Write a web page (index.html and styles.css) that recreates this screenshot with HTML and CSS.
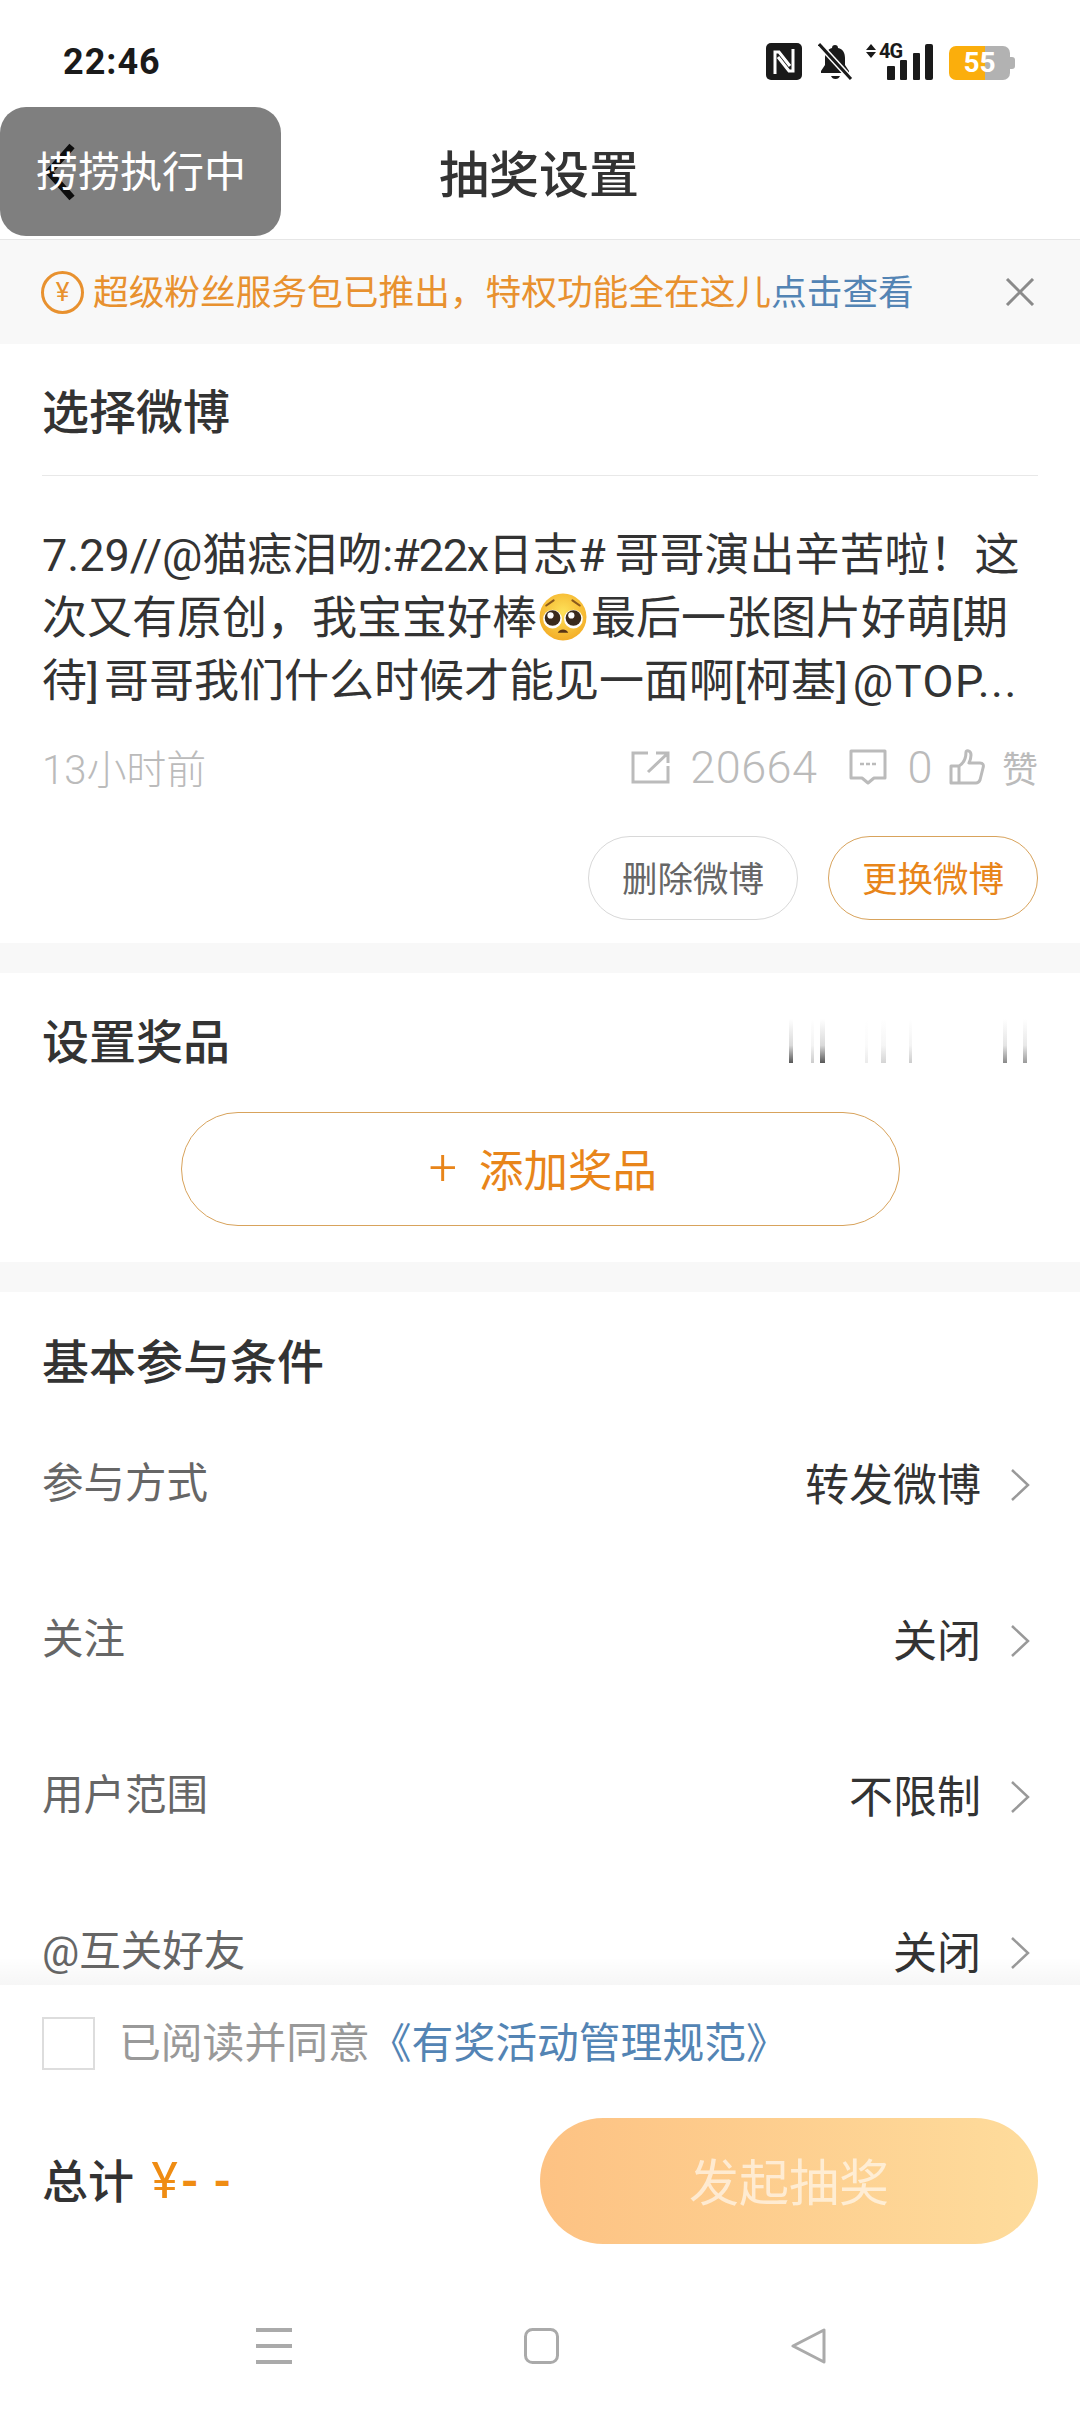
FILE: index.html
```html
<!DOCTYPE html>
<html lang="zh-CN">
<head>
    <meta charset="UTF-8">
    <meta name="viewport" content="width=device-width, initial-scale=1.0">
    <title>抽奖设置</title>
    <link rel="stylesheet" href="styles.css">
</head>
<body>
<div class="screen">
    <!-- barra de status -->
    <div class="status-bar">
        <span class="time">22:46</span>
        <div class="status-icons">
            <svg class="ic-nfc" width="36" height="37" viewBox="0 0 36 37">
                <rect width="36" height="37" rx="5" fill="#1a1a1a"/>
                <path d="M9 31V9h4l11 14M27 6v22h-4L12 14" fill="none" stroke="#fff" stroke-width="3"/>
            </svg>
            <svg class="ic-bell" width="35" height="37" viewBox="0 0 35 37">
                <path d="M17 2c2 0 3 1 3 3 5 1 7 5 7 10v7l4 6v2H3v-2l4-6v-7c0-5 3-9 7-10 0-2 1-3 3-3zM13 33h9c-1 2-2 3-4.500 3S14 35 13 33z" fill="#1a1a1a"/>
                <path d="M1 1l32 35" stroke="#fff" stroke-width="6"/>
                <path d="M1 1l32 35" stroke="#1a1a1a" stroke-width="3"/>
            </svg>
            <svg class="ic-signal" width="67" height="47" viewBox="0 -10 67 47">
                <path d="M5 1l5 6H0zM5 15L0 9h10z" fill="#1a1a1a"/>
                <text class="net-label" x="13" y="15">4G</text>
                <rect x="21" y="23" width="8" height="14" rx="1" fill="#1a1a1a"/>
                <rect x="34" y="17" width="7" height="20" rx="1" fill="#1a1a1a"/>
                <rect x="47" y="10" width="7" height="27" rx="1" fill="#1a1a1a"/>
                <rect x="59" y="1" width="8" height="36" rx="2" fill="#1a1a1a"/>
            </svg>
            <div class="battery">55</div>
        </div>
    </div>

    <!-- cabecalho -->
    <div class="nav-bar">
        <svg class="nav-back" width="32" height="60" viewBox="0 0 32 60">
            <path d="M28 3L5 29l23 26" fill="none" stroke="#1a1a1a" stroke-width="7"/>
        </svg>
        <div class="nav-title">抽奖设置</div>
    </div>
    <div class="toast">捞捞执行中</div>

    <div class="banner">
        <span class="coin">¥</span>
        <span class="banner-text">超级粉丝服务包已推出，特权功能全在这儿<span class="link">点击查看</span></span>
        <svg class="banner-close" width="30" height="28" viewBox="0 0 30 28">
            <path d="M2 1l26 26M28 1L2 27" fill="none" stroke="#8a8a8a" stroke-width="3"/>
        </svg>
    </div>

    <div class="content">
        <section class="card card-post">
            <div class="post-head"><h2>选择微博</h2></div>
            <p class="post-text">
                <span class="line">7.29//@猫痣泪吻<span class="tight">:#22x</span>日志<span class="tight"># </span>哥哥演出辛苦啦！这</span>
                <span class="line">次又有原创，我宝宝好棒<svg class="emoji" width="48" height="48" viewBox="0 0 46 46">
                    <defs>
                        <radialGradient id="face" cx="50%" cy="40%" r="60%">
                            <stop offset="0" stop-color="#fde25a"/>
                            <stop offset="1" stop-color="#f4ae28"/>
                        </radialGradient>
                    </defs>
                    <circle cx="23" cy="23" r="22.500" fill="url(#face)"/>
                    <circle cx="13" cy="25" r="9" fill="#fff"/>
                    <circle cx="33" cy="25" r="9" fill="#fff"/>
                    <circle cx="13" cy="24" r="7.500" fill="#3a2a1c"/>
                    <circle cx="33" cy="24" r="7.500" fill="#3a2a1c"/>
                    <circle cx="11" cy="21.500" r="3" fill="#fff"/>
                    <circle cx="31" cy="21.500" r="3" fill="#fff"/>
                    <path d="M7 12l7-5M39 12l-7-5" stroke="#8a5a1c" stroke-width="2" stroke-linecap="round"/>
                    <path d="M18 38c2-4 8-4 10 0z" fill="#5a3414"/>
                </svg>最后一张图片好萌[期</span>
                <span class="line">待<span class="bk">]</span>哥哥我们什么时候才能见一面啊[柯基<span class="bk">]</span><span class="wide">@TOP...</span></span>
            </p>
            <div class="post-meta">
                <span class="post-time">13小时前</span>
                <svg class="ic-share" width="39" height="33" viewBox="0 0 39 33">
                    <path d="M17 2H2v29h35V15M17 21L36 3M25 2h12v10" fill="none" stroke="#bbb" stroke-width="3"/>
                </svg>
                <span class="post-num num-share">20664</span>
                <svg class="ic-comment" width="38" height="36" viewBox="0 0 38 36">
                    <path d="M2 2h34v27H25l-6 5-6-5H2z" fill="none" stroke="#bbb" stroke-width="3" stroke-linejoin="round"/>
                    <path d="M11 15h4M17 15h4M23 15h4" stroke="#bbb" stroke-width="2.500"/>
                </svg>
                <span class="post-num num-comment">0</span>
                <svg class="ic-like" width="36" height="36" viewBox="0 0 36 36">
                    <path d="M2 17h8v17H2zM10 17c5-3 7-8 7-14 0-2 5-2 5 3 0 3-1 6-2 8h11c3 0 4 2 3 5l-3 12c-1 2-2 3-4 3H10" fill="none" stroke="#bbb" stroke-width="3" stroke-linejoin="round"/>
                </svg>
                <span class="post-like">赞</span>
            </div>
            <div class="post-actions">
                <button class="pill pill-gray">删除微博</button>
                <button class="pill pill-orange">更换微博</button>
            </div>
        </section>

        <section class="card card-prize">
            <div class="prize-head">
                <h2>设置奖品</h2>
                <svg class="streaks" width="246" height="44" viewBox="0 0 246 44">
                    <defs>
                        <linearGradient id="streak" x1="0" y1="0" x2="0" y2="1">
                            <stop offset="0" stop-color="#444" stop-opacity="0"/>
                            <stop offset="0.6" stop-color="#444" stop-opacity="0.2"/>
                            <stop offset="1" stop-color="#444" stop-opacity="0.9"/>
                        </linearGradient>
                    </defs>
                    <rect x="2" width="4" height="44" fill="url(#streak)"/>
                    <rect x="24" width="3" height="44" fill="url(#streak)" opacity=".3"/>
                    <rect x="33" width="5" height="44" fill="url(#streak)"/>
                    <rect x="78" width="3" height="44" fill="url(#streak)" opacity=".12"/>
                    <rect x="94" width="5" height="44" fill="url(#streak)" opacity=".25"/>
                    <rect x="122" width="3" height="44" fill="url(#streak)" opacity=".3"/>
                    <rect x="216" width="4" height="44" fill="url(#streak)" opacity=".7"/>
                    <rect x="236" width="4" height="44" fill="url(#streak)" opacity=".6"/>
                </svg>
            </div>
            <button class="add-prize"><span class="plus">+</span>添加奖品</button>
        </section>

        <section class="card card-cond">
            <h2 class="cond-head">基本参与条件</h2>
            <div class="cond-row">
                <span class="cond-label">参与方式</span>
                <span class="cond-value">转发微博</span>
                <svg class="chevron" width="20" height="32" viewBox="0 0 20 32"><path d="M2 1l16 15L2 31" fill="none" stroke="#999" stroke-width="2.500"/></svg>
            </div>
            <div class="cond-row">
                <span class="cond-label">关注</span>
                <span class="cond-value">关闭</span>
                <svg class="chevron" width="20" height="32" viewBox="0 0 20 32"><path d="M2 1l16 15L2 31" fill="none" stroke="#999" stroke-width="2.500"/></svg>
            </div>
            <div class="cond-row">
                <span class="cond-label">用户范围</span>
                <span class="cond-value">不限制</span>
                <svg class="chevron" width="20" height="32" viewBox="0 0 20 32"><path d="M2 1l16 15L2 31" fill="none" stroke="#999" stroke-width="2.500"/></svg>
            </div>
            <div class="cond-row">
                <span class="cond-label">@互关好友</span>
                <span class="cond-value">关闭</span>
                <svg class="chevron" width="20" height="32" viewBox="0 0 20 32"><path d="M2 1l16 15L2 31" fill="none" stroke="#999" stroke-width="2.500"/></svg>
            </div>
        </section>
    </div>

    <!-- rodape fixo -->
    <div class="footer">
        <div class="agree">
            <span class="checkbox"></span>
            <span class="agree-text">已阅读并同意<span class="link">《有奖活动管理规范》</span></span>
        </div>
        <div class="total-row">
            <div class="total"><b>总计</b> <span class="total-yen">¥</span><span class="total-dash">- -</span></div>
            <button class="submit">发起抽奖</button>
        </div>
        <div class="sys-nav">
            <svg width="36" height="36" viewBox="0 0 36 36"><path d="M0 2h36M0 18h36M0 34h36" stroke="#aaa" stroke-width="4"/></svg>
            <svg width="35" height="36" viewBox="0 0 35 36"><rect x="1.500" y="1.500" width="32" height="33" rx="7" fill="none" stroke="#aaa" stroke-width="3"/></svg>
            <svg width="35" height="36" viewBox="0 0 35 36"><path d="M33 2v32L2 18z" fill="none" stroke="#aaa" stroke-width="3" stroke-linejoin="round"/></svg>
        </div>
    </div>
</div>
</body>
</html>
```

FILE: styles.css
```css
* {
    box-sizing: border-box;
}
html, body {
    margin: 0;
    padding: 0;
}
body {
    font-family: Roboto, "Noto Sans CJK SC", sans-serif;
    color: #333;
    background-color: #fff;
}
h2 {
    margin: 0;
    font-size: 47px;
    font-weight: 500;
    line-height: 70px;
    color: #333;
}
button {
    font-family: inherit;
    background: none;
    padding: 0;
}
.screen {
    position: relative;
    display: flex;
    flex-direction: column;
    width: 1080px;
    height: 2412px;
    overflow: hidden;
}

/* status */
.status-bar {
    display: flex;
    justify-content: space-between;
    align-items: flex-start;
    flex: none;
    height: 107px;
    padding: 43px 65px 0 63px;
}
.time {
    font-size: 36px;
    font-weight: 700;
    line-height: 38px;
    letter-spacing: 1px;
    color: #1a1a1a;
}
.status-icons {
    display: flex;
    align-items: flex-start;
}
.ic-bell {
    margin-left: 16px;
}
.ic-signal {
    margin: -10px 0 0 13px;
}
.net-label {
    font-family: Roboto, sans-serif;
    font-size: 20px;
    font-weight: 700;
    letter-spacing: -1px;
    fill: #1a1a1a;
}
.battery {
    position: relative;
    width: 61px;
    height: 34px;
    margin: 3px 5px 0 16px;
    border-radius: 7px;
    background: linear-gradient(90deg, #fbae0c 59%, #b2b2b2 59%);
    color: #fff;
    font-size: 28px;
    font-weight: 700;
    line-height: 34px;
    text-align: center;
}
.battery::after {
    content: "";
    position: absolute;
    right: -5px;
    top: 11px;
    width: 5px;
    height: 12px;
    border-radius: 0 3px 3px 0;
    background-color: #b2b2b2;
}

/* cabecalho */
.nav-bar {
    display: flex;
    align-items: center;
    flex: none;
    height: 133px;
    padding-left: 44px;
    border-bottom: 1px solid #e6e6e6;
}
.nav-title {
    margin: 0 0 5px 363px;
    font-size: 50px;
    font-weight: 500;
    color: #333;
}
.toast {
    position: absolute;
    left: 0;
    top: 107px;
    width: 281px;
    height: 129px;
    padding-left: 36px;
    border-radius: 26px;
    background-color: rgba(0, 0, 0, 0.5);
    color: #fff;
    font-size: 42px;
    line-height: 131px;
}

.banner {
    display: flex;
    align-items: center;
    flex: none;
    height: 104px;
    padding: 0 45px 0 41px;
    background-color: #f8f8f8;
}
.coin {
    flex: none;
    width: 43px;
    height: 43px;
    border: 3px solid #e8912f;
    border-radius: 50%;
    color: #e8912f;
    font-size: 26px;
    line-height: 36px;
    text-align: center;
}
.banner-text {
    flex: 1;
    margin: 0 0 5px 9px;
    color: #e8912f;
    font-size: 35.700px;
    white-space: nowrap;
}
.link {
    color: #5384b4;
}

.content {
    flex: 1;
    min-height: 0;
    overflow: hidden;
    background-color: #f8f8f8;
}
.card {
    background-color: #fff;
    padding: 0 42px;
}

/* bloco do post */
.card-post {
    height: 599px;
    margin-bottom: 30px;
}
.post-head {
    height: 132px;
    padding-top: 34px;
    border-bottom: 1px solid #e8e8e8;
}
.post-text {
    margin: 48px 0 0;
    font-size: 45px;
    line-height: 63px;
    color: #333;
}
.line {
    display: block;
    white-space: nowrap;
}
.tight {
    letter-spacing: -1.200px;
}
.bk {
    letter-spacing: 5px;
}
.wide {
    letter-spacing: 1.500px;
}
.emoji {
    width: 48px;
    height: 48px;
    margin: 0 4px 0 2px;
    vertical-align: -7px;
}
.post-meta {
    display: flex;
    align-items: center;
    height: 60px;
    margin-top: 24px;
    color: #bbb;
}
.post-time {
    flex: 1;
    font-size: 40px;
    font-weight: 300;
}
.post-num {
    font-size: 45px;
    font-weight: 300;
    letter-spacing: 0.500px;
}
.num-share {
    margin: 0 31px 0 20px;
}
.num-comment {
    margin: 0 16px 0 21px;
}
.post-like {
    margin-left: 17px;
    font-size: 36px;
}
.post-actions {
    display: flex;
    justify-content: flex-end;
    gap: 30px;
    margin-top: 39px;
}
.pill {
    width: 210px;
    height: 84px;
    padding-bottom: 3px;
    border-radius: 42px;
    font-size: 35.500px;
    cursor: pointer;
}
.pill-gray {
    border: 1px solid #d8d8d8;
    color: #666;
}
.pill-orange {
    border: 1px solid #d8a35c;
    color: #e8851a;
}

/* premios */
.card-prize {
    height: 289px;
    margin-bottom: 30px;
    padding-top: 35px;
}
.prize-head {
    display: flex;
    justify-content: space-between;
    align-items: center;
}
.streaks {
    margin: -4px 5px 0 0;
}
.add-prize {
    display: flex;
    justify-content: center;
    align-items: center;
    width: 719px;
    height: 114px;
    margin: 34px auto 0;
    padding: 0 0 4px 6px;
    border: 1px solid #d8a35c;
    border-radius: 57px;
    color: #e8851a;
    font-size: 44.500px;
    cursor: pointer;
}
.plus {
    margin-right: 22px;
    font-size: 50px;
    font-weight: 300;
    line-height: 50px;
}

/* condicoes */
.card-cond {
    padding-top: 36px;
    height: 800px;
}
.cond-head {
    margin-bottom: 7px;
}
.cond-row {
    display: flex;
    align-items: center;
    height: 156px;
    padding-bottom: 6px;
}
.cond-label {
    flex: 1;
    color: #666;
    font-size: 41.500px;
}
.cond-value {
    margin-top: 3px;
    color: #333;
    font-size: 44px;
}
.chevron {
    margin: 9px 8px 0 29px;
}

/* rodape */
.footer {
    position: relative;
    flex: none;
    height: 427px;
    padding: 32px 42px 0;
    background-color: #fff;
}
.footer::before {
    content: "";
    position: absolute;
    left: 0;
    right: 0;
    top: -28px;
    height: 28px;
    background: linear-gradient(rgba(0, 0, 0, 0), rgba(0, 0, 0, 0.035));
}
.agree {
    display: flex;
    align-items: center;
    height: 53px;
}
.checkbox {
    flex: none;
    width: 53px;
    height: 53px;
    border: 2px solid #ddd;
}
.agree-text {
    margin: 0 0 8px 24px;
    color: #999;
    font-size: 41.800px;
    white-space: nowrap;
}
.total-row {
    display: flex;
    justify-content: space-between;
    align-items: center;
    margin-top: 48px;
}
.total {
    margin-bottom: 7px;
    font-size: 46px;
    color: #333;
}
.total b {
    font-weight: 500;
}
.total-yen {
    margin-left: 6px;
    color: #ef8c13;
    font-size: 50px;
}
.total-dash {
    margin-left: 3px;
    color: #ef8c13;
    font-weight: 700;
    word-spacing: 3px;
}
.submit {
    width: 498px;
    height: 126px;
    padding-bottom: 5px;
    border: none;
    border-radius: 63px;
    background: linear-gradient(90deg, #fdc283, #fedc9c);
    color: rgba(255, 255, 255, 0.6);
    font-size: 50px;
}
.sys-nav {
    display: flex;
    justify-content: space-between;
    width: 570px;
    margin: 84px 0 0 214px;
}
```
